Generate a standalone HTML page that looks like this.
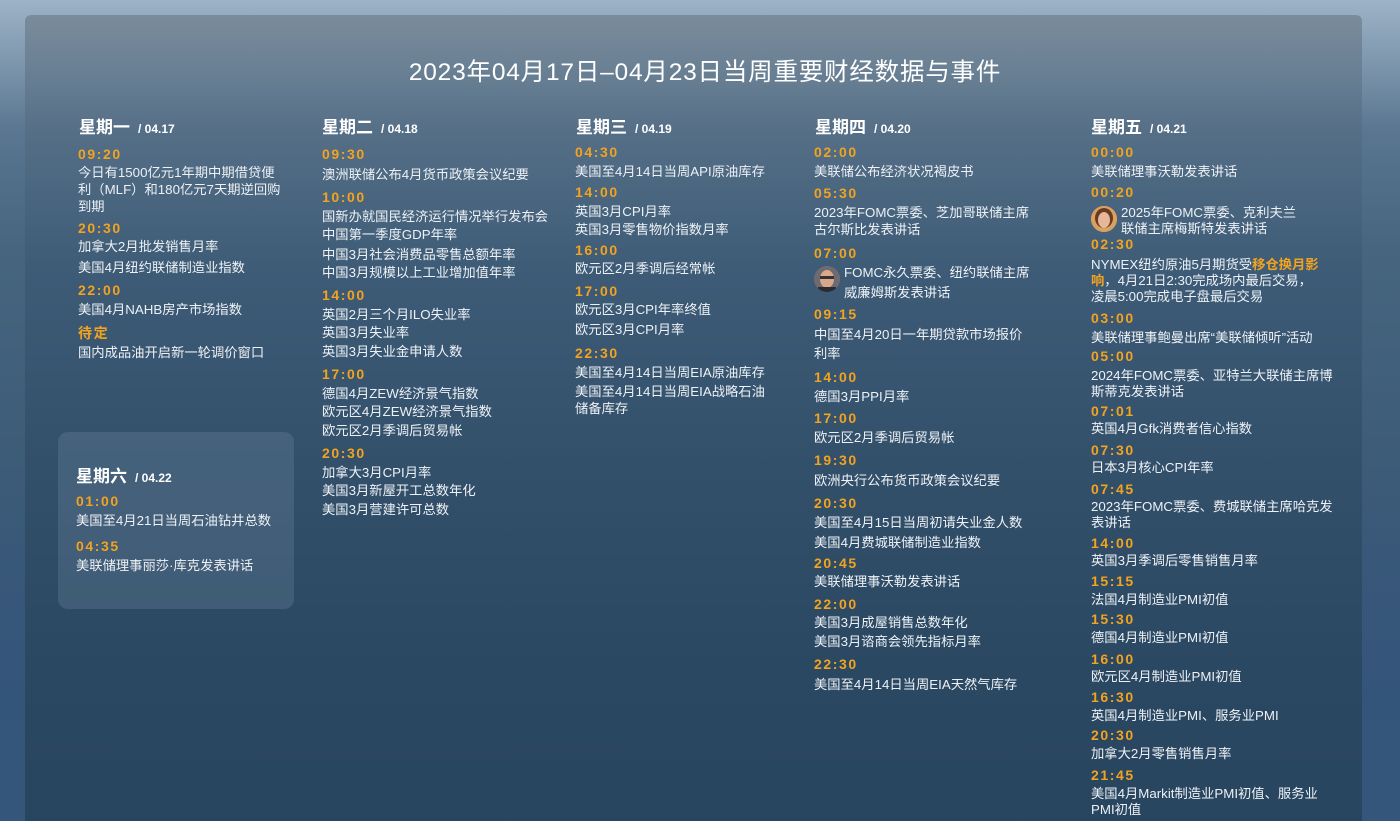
<!DOCTYPE html>
<html style="background:#2a4862"><head><meta charset="utf-8">
<style>
*{margin:0;padding:0;box-sizing:border-box}
html,body{width:1400px;height:821px;overflow:hidden}
body{position:relative;
font-family:"Liberation Sans","Noto Sans CJK SC",sans-serif;
background:linear-gradient(180deg,#9db3c7 0px,#7f98ae 60px,#5a7690 130px,#46657f 250px,#3d5c78 450px,#35557a 650px,#33567a 821px);}
.panel{position:absolute;left:25px;top:15px;width:1337px;height:806px;border-radius:6px 6px 0 0;
background:linear-gradient(180deg,#7a8c9b 0px,#687f93 60px,#546e86 120px,#3d5b76 260px,#33506b 450px,#2b4862 650px,#284560 821px);}
.sat{position:absolute;left:58px;top:432px;width:236px;height:177px;border-radius:10px;background:rgba(140,165,190,.2)}
h1{position:absolute;left:0;width:1410px;top:53px;text-align:center;color:#fff;font-size:24.5px;font-weight:normal;letter-spacing:.8px}
.h{position:absolute;color:#fff;font-weight:bold;font-size:17px;white-space:nowrap}
.h span{font-size:12px;font-weight:bold;margin-left:8px}
.t{position:absolute;color:#f2a31f;font-weight:bold;font-size:14px;letter-spacing:1.6px;line-height:18px}
.d{position:absolute;color:#edf1f5;font-size:13.3px;line-height:18px;white-space:nowrap}
.o{color:#f2a31f;font-weight:bold}
.av{position:absolute;width:26px;height:26px;border-radius:50%;overflow:hidden;background:#c9a88a}
</style></head><body>
<div class="panel"></div>
<div class="sat"></div>
<h1>2023年04月17日–04月23日当周重要财经数据与事件</h1>

<div class="h" style="left:79px;top:113px">星期一<span>/ 04.17</span></div>
<div class="t" style="left:78px;top:145px">09:20</div>
<div class="d" style="left:78px;top:164px">今日有1500亿元1年期中期借贷便</div>
<div class="d" style="left:78px;top:181px">利（MLF）和180亿元7天期逆回购</div>
<div class="d" style="left:78px;top:198px">到期</div>
<div class="t" style="left:78px;top:219px">20:30</div>
<div class="d" style="left:78px;top:238px">加拿大2月批发销售月率</div>
<div class="d" style="left:78px;top:259px">美国4月纽约联储制造业指数</div>
<div class="t" style="left:78px;top:281px">22:00</div>
<div class="d" style="left:78px;top:301px">美国4月NAHB房产市场指数</div>
<div class="t" style="left:78px;top:324px">待定</div>
<div class="d" style="left:78px;top:344px">国内成品油开启新一轮调价窗口</div>

<div class="h" style="left:76px;top:462px">星期六<span>/ 04.22</span></div>
<div class="t" style="left:76px;top:492px">01:00</div>
<div class="d" style="left:76px;top:512px">美国至4月21日当周石油钻井总数</div>
<div class="t" style="left:76px;top:537px">04:35</div>
<div class="d" style="left:76px;top:557px">美联储理事丽莎·库克发表讲话</div>

<div class="h" style="left:322px;top:113px">星期二<span>/ 04.18</span></div>
<div class="t" style="left:322px;top:145px">09:30</div>
<div class="d" style="left:322px;top:166px">澳洲联储公布4月货币政策会议纪要</div>
<div class="t" style="left:322px;top:188px">10:00</div>
<div class="d" style="left:322px;top:208px">国新办就国民经济运行情况举行发布会</div>
<div class="d" style="left:322px;top:226px">中国第一季度GDP年率</div>
<div class="d" style="left:322px;top:246px">中国3月社会消费品零售总额年率</div>
<div class="d" style="left:322px;top:264px">中国3月规模以上工业增加值年率</div>
<div class="t" style="left:322px;top:286px">14:00</div>
<div class="d" style="left:322px;top:306px">英国2月三个月ILO失业率</div>
<div class="d" style="left:322px;top:324px">英国3月失业率</div>
<div class="d" style="left:322px;top:343px">英国3月失业金申请人数</div>
<div class="t" style="left:322px;top:365px">17:00</div>
<div class="d" style="left:322px;top:385px">德国4月ZEW经济景气指数</div>
<div class="d" style="left:322px;top:403px">欧元区4月ZEW经济景气指数</div>
<div class="d" style="left:322px;top:422px">欧元区2月季调后贸易帐</div>
<div class="t" style="left:322px;top:444px">20:30</div>
<div class="d" style="left:322px;top:464px">加拿大3月CPI月率</div>
<div class="d" style="left:322px;top:482px">美国3月新屋开工总数年化</div>
<div class="d" style="left:322px;top:501px">美国3月营建许可总数</div>

<div class="h" style="left:576px;top:113px">星期三<span>/ 04.19</span></div>
<div class="t" style="left:575px;top:143px">04:30</div>
<div class="d" style="left:575px;top:163px">美国至4月14日当周API原油库存</div>
<div class="t" style="left:575px;top:183px">14:00</div>
<div class="d" style="left:575px;top:203px">英国3月CPI月率</div>
<div class="d" style="left:575px;top:221px">英国3月零售物价指数月率</div>
<div class="t" style="left:575px;top:241px">16:00</div>
<div class="d" style="left:575px;top:260px">欧元区2月季调后经常帐</div>
<div class="t" style="left:575px;top:282px">17:00</div>
<div class="d" style="left:575px;top:301px">欧元区3月CPI年率终值</div>
<div class="d" style="left:575px;top:321px">欧元区3月CPI月率</div>
<div class="t" style="left:575px;top:344px">22:30</div>
<div class="d" style="left:575px;top:364px">美国至4月14日当周EIA原油库存</div>
<div class="d" style="left:575px;top:383px">美国至4月14日当周EIA战略石油</div>
<div class="d" style="left:575px;top:400px">储备库存</div>

<div class="h" style="left:815px;top:113px">星期四<span>/ 04.20</span></div>
<div class="t" style="left:814px;top:143px">02:00</div>
<div class="d" style="left:814px;top:163px">美联储公布经济状况褐皮书</div>
<div class="t" style="left:814px;top:184px">05:30</div>
<div class="d" style="left:814px;top:204px">2023年FOMC票委、芝加哥联储主席</div>
<div class="d" style="left:814px;top:221px">古尔斯比发表讲话</div>
<div class="t" style="left:814px;top:244px">07:00</div>
<div class="av" style="left:814px;top:266px;background:#8a6a5a"><svg width="26" height="26"><rect width="26" height="26" fill="#6d6a70"/><ellipse cx="13" cy="13" rx="7" ry="9" fill="#d9a88c"/><rect x="6" y="10" width="14" height="3" fill="#333"/><rect x="4" y="21" width="18" height="6" fill="#2b2b33"/></svg></div>
<div class="d" style="left:844px;top:264px">FOMC永久票委、纽约联储主席</div>
<div class="d" style="left:844px;top:284px">威廉姆斯发表讲话</div>
<div class="t" style="left:814px;top:305px">09:15</div>
<div class="d" style="left:814px;top:326px">中国至4月20日一年期贷款市场报价</div>
<div class="d" style="left:814px;top:345px">利率</div>
<div class="t" style="left:814px;top:368px">14:00</div>
<div class="d" style="left:814px;top:388px">德国3月PPI月率</div>
<div class="t" style="left:814px;top:409px">17:00</div>
<div class="d" style="left:814px;top:429px">欧元区2月季调后贸易帐</div>
<div class="t" style="left:814px;top:451px">19:30</div>
<div class="d" style="left:814px;top:472px">欧洲央行公布货币政策会议纪要</div>
<div class="t" style="left:814px;top:494px">20:30</div>
<div class="d" style="left:814px;top:514px">美国至4月15日当周初请失业金人数</div>
<div class="d" style="left:814px;top:534px">美国4月费城联储制造业指数</div>
<div class="t" style="left:814px;top:554px">20:45</div>
<div class="d" style="left:814px;top:573px">美联储理事沃勒发表讲话</div>
<div class="t" style="left:814px;top:595px">22:00</div>
<div class="d" style="left:814px;top:614px">美国3月成屋销售总数年化</div>
<div class="d" style="left:814px;top:633px">美国3月谘商会领先指标月率</div>
<div class="t" style="left:814px;top:655px">22:30</div>
<div class="d" style="left:814px;top:676px">美国至4月14日当周EIA天然气库存</div>

<div class="h" style="left:1091px;top:113px">星期五<span>/ 04.21</span></div>
<div class="t" style="left:1091px;top:143px">00:00</div>
<div class="d" style="left:1091px;top:163px">美联储理事沃勒发表讲话</div>
<div class="t" style="left:1091px;top:183px">00:20</div>
<div class="av" style="left:1091px;top:206px"><svg width="26" height="26"><rect width="26" height="26" fill="#d9a060"/><ellipse cx="13" cy="12" rx="9" ry="10" fill="#6a3a22"/><ellipse cx="13" cy="14" rx="6" ry="8" fill="#e6b89a"/></svg></div>
<div class="d" style="left:1121px;top:204px">2025年FOMC票委、克利夫兰</div>
<div class="d" style="left:1121px;top:220px">联储主席梅斯特发表讲话</div>
<div class="t" style="left:1091px;top:235px">02:30</div>
<div class="d" style="left:1091px;top:256px">NYMEX纽约原油5月期货受<span class="o">移仓换月影</span></div>
<div class="d" style="left:1091px;top:272px"><span class="o">响</span>，4月21日2:30完成场内最后交易，</div>
<div class="d" style="left:1091px;top:288px">凌晨5:00完成电子盘最后交易</div>
<div class="t" style="left:1091px;top:309px">03:00</div>
<div class="d" style="left:1091px;top:329px">美联储理事鲍曼出席“美联储倾听”活动</div>
<div class="t" style="left:1091px;top:347px">05:00</div>
<div class="d" style="left:1091px;top:367px">2024年FOMC票委、亚特兰大联储主席博</div>
<div class="d" style="left:1091px;top:383px">斯蒂克发表讲话</div>
<div class="t" style="left:1091px;top:402px">07:01</div>
<div class="d" style="left:1091px;top:420px">英国4月Gfk消费者信心指数</div>
<div class="t" style="left:1091px;top:441px">07:30</div>
<div class="d" style="left:1091px;top:459px">日本3月核心CPI年率</div>
<div class="t" style="left:1091px;top:480px">07:45</div>
<div class="d" style="left:1091px;top:498px">2023年FOMC票委、费城联储主席哈克发</div>
<div class="d" style="left:1091px;top:514px">表讲话</div>
<div class="t" style="left:1091px;top:534px">14:00</div>
<div class="d" style="left:1091px;top:552px">英国3月季调后零售销售月率</div>
<div class="t" style="left:1091px;top:572px">15:15</div>
<div class="d" style="left:1091px;top:591px">法国4月制造业PMI初值</div>
<div class="t" style="left:1091px;top:610px">15:30</div>
<div class="d" style="left:1091px;top:629px">德国4月制造业PMI初值</div>
<div class="t" style="left:1091px;top:650px">16:00</div>
<div class="d" style="left:1091px;top:668px">欧元区4月制造业PMI初值</div>
<div class="t" style="left:1091px;top:688px">16:30</div>
<div class="d" style="left:1091px;top:707px">英国4月制造业PMI、服务业PMI</div>
<div class="t" style="left:1091px;top:726px">20:30</div>
<div class="d" style="left:1091px;top:745px">加拿大2月零售销售月率</div>
<div class="t" style="left:1091px;top:766px">21:45</div>
<div class="d" style="left:1091px;top:785px">美国4月Markit制造业PMI初值、服务业</div>
<div class="d" style="left:1091px;top:801px">PMI初值</div>
</body></html>
